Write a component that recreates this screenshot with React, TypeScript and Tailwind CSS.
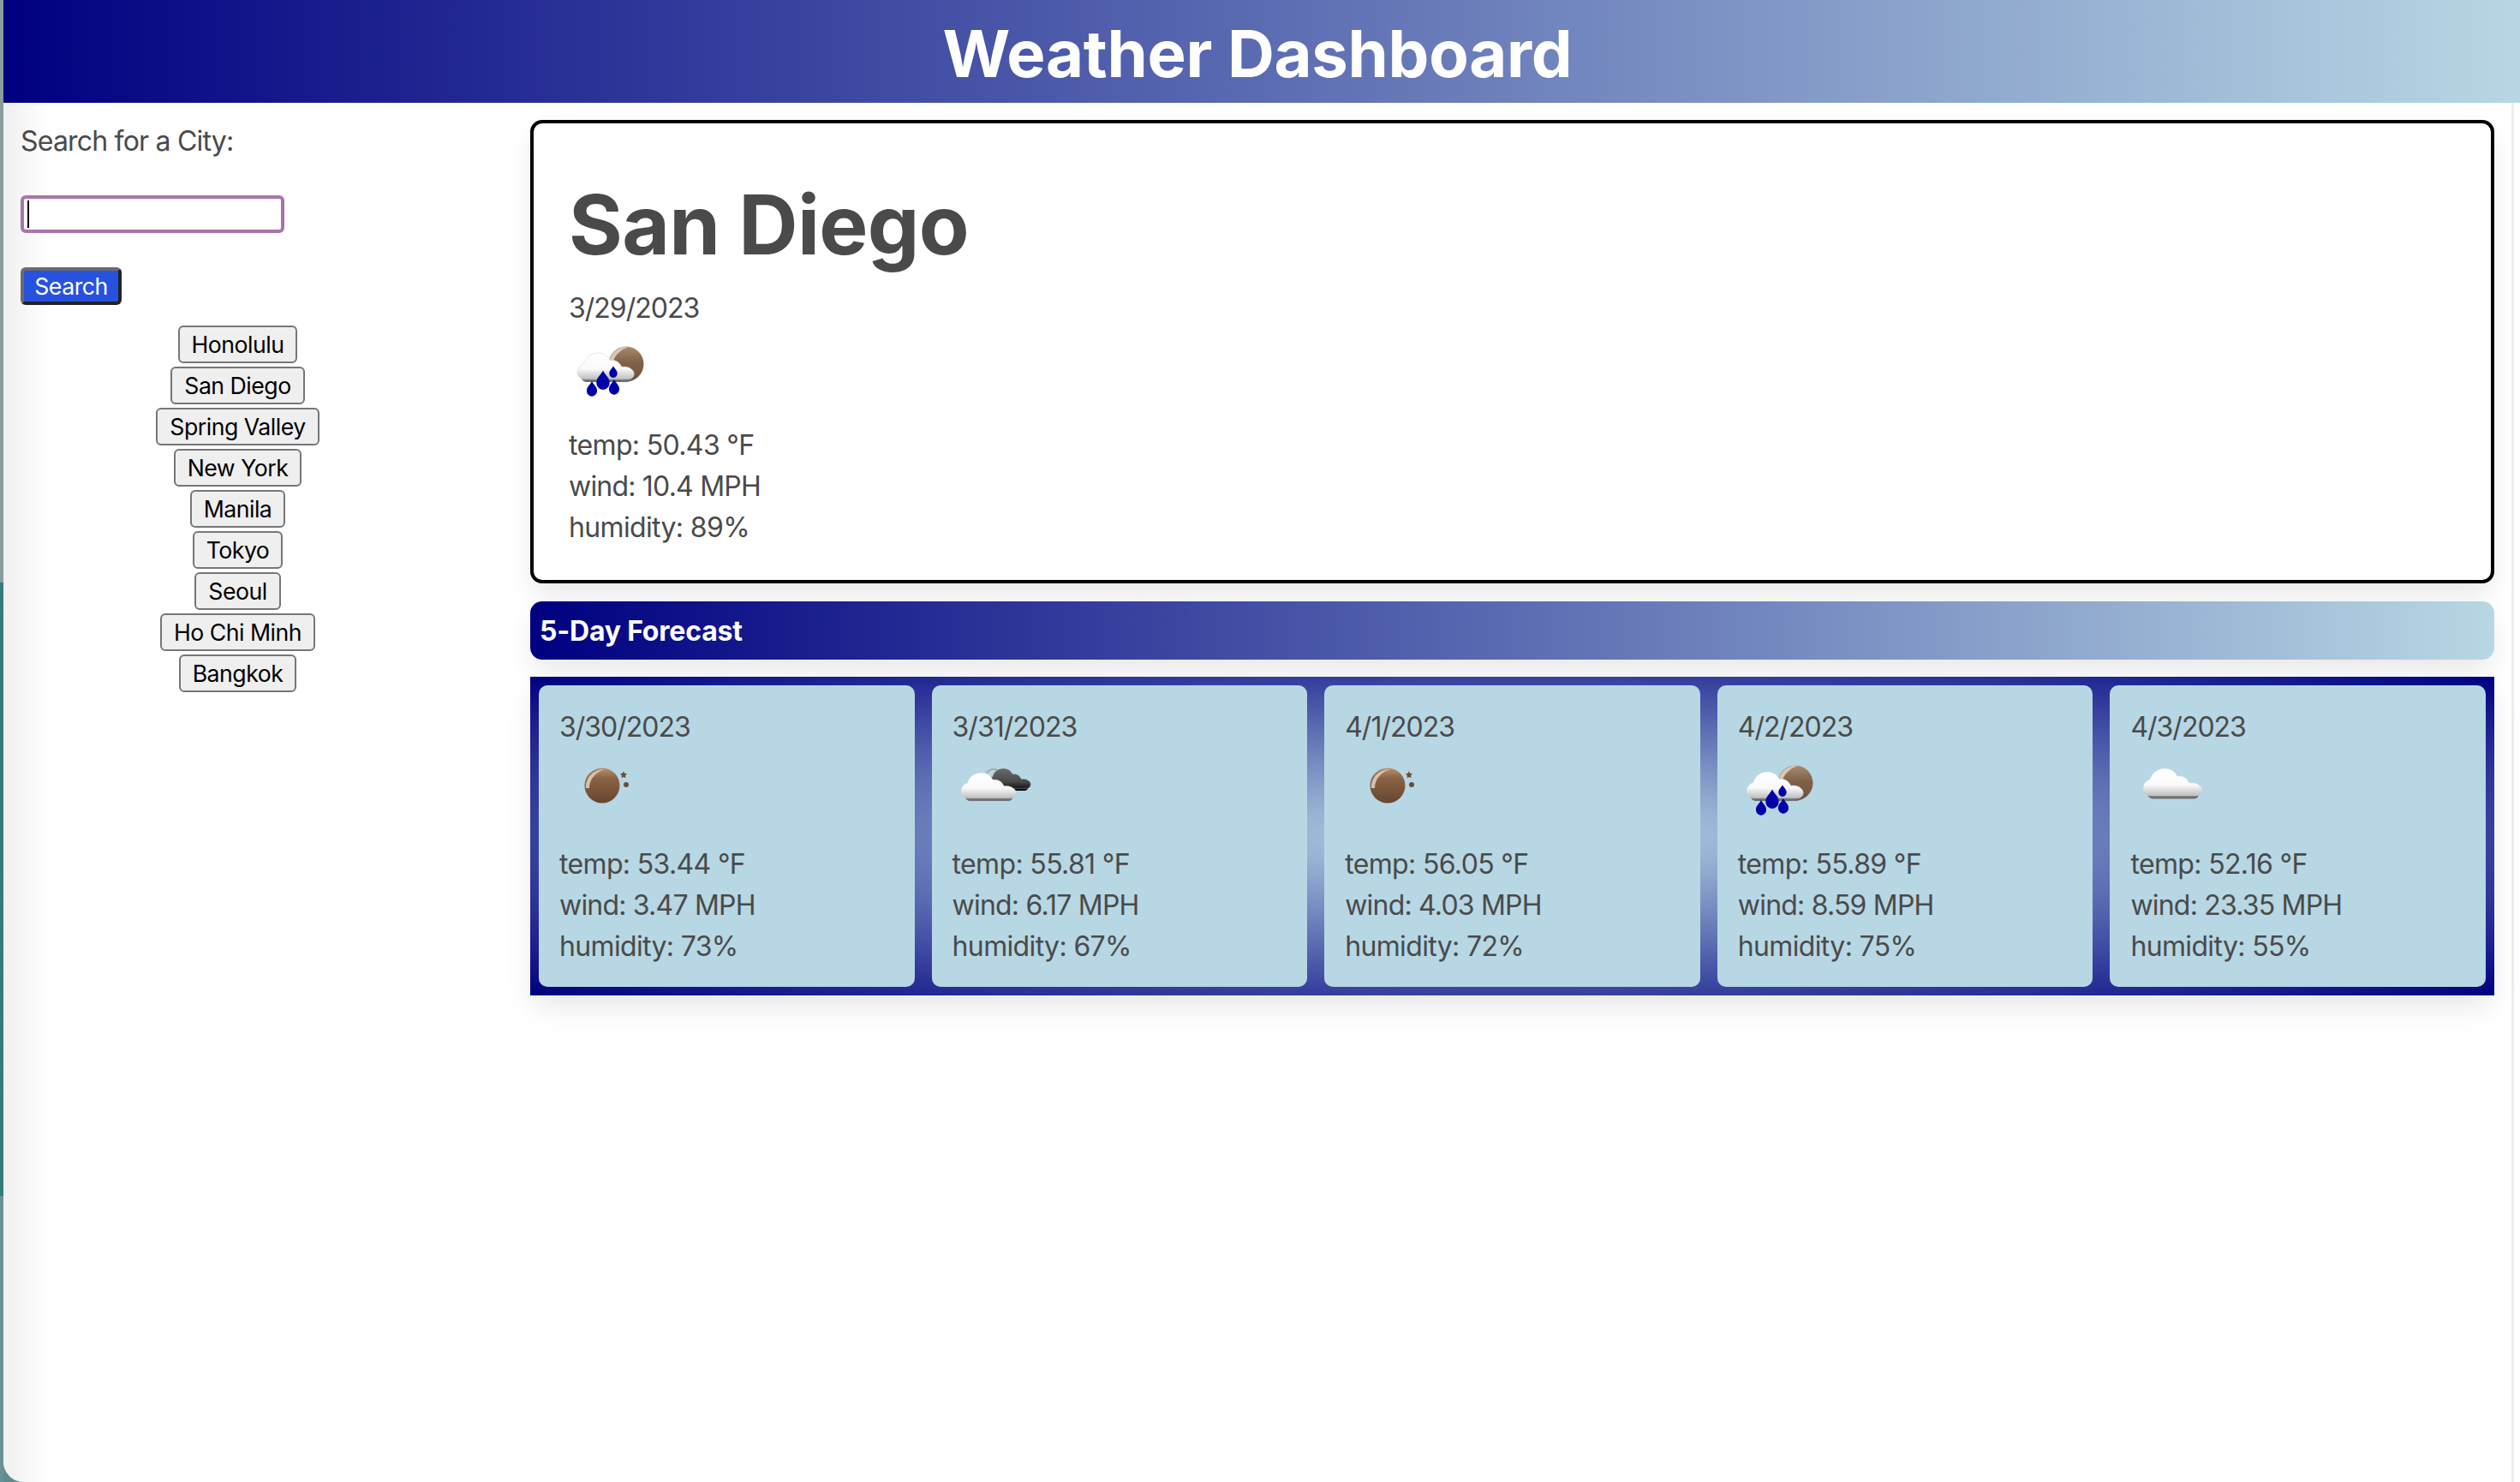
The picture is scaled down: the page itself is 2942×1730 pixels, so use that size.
const cities = ['Honolulu', 'San Diego', 'Spring Valley', 'New York', 'Manila', 'Tokyo', 'Seoul', 'Ho Chi Minh', 'Bangkok']

type IconKind = 'rain' | 'moon' | 'clouds' | 'cloud'

const forecast: { date: string; icon: IconKind; temp: string; wind: string; humidity: string }[] = [
  { date: '3/30/2023', icon: 'moon', temp: '53.44', wind: '3.47', humidity: '73' },
  { date: '3/31/2023', icon: 'clouds', temp: '55.81', wind: '6.17', humidity: '67' },
  { date: '4/1/2023', icon: 'moon', temp: '56.05', wind: '4.03', humidity: '72' },
  { date: '4/2/2023', icon: 'rain', temp: '55.89', wind: '8.59', humidity: '75' },
  { date: '4/3/2023', icon: 'cloud', temp: '52.16', wind: '23.35', humidity: '55' },
]

const CLOUD = 'M9 32C3 32 0 27 0 23C0 18 4 14 8 13C10 5 17 0 25 0C32 0 37 3 40 9C45 8 51 10 54 17C58 16 63 17 66 20C69 22 70 26 68 29C66 32 63 32 60 32Z'
const DROP = 'M0 -9C2 -5 5.5 -3 5.5 1C5.5 4.5 3 7 0 7C-3 7 -5.5 4.5 -5.5 1C-5.5 -3 -2 -5 0 -9Z'

function Cloud({ x, y, s = 1, fill = 'url(#cloudWhite)', base = '#6f6f6f' }: { x: number; y: number; s?: number; fill?: string; base?: string }) {
  return (
    <g transform={`translate(${x} ${y}) scale(${s})`}>
      <path d={CLOUD} fill={base} transform="translate(4 3.5) scale(0.89 1)" />
      <path d={CLOUD} fill={fill} stroke="#cfcfcf" strokeOpacity="0.55" strokeWidth="0.9" />
    </g>
  )
}

function WeatherIcon({ kind }: { kind: IconKind }) {
  return (
    <svg viewBox="0 0 100 100" className="block h-[100px] w-[100px]">
      <defs>
        <linearGradient id="cloudWhite" x1="0" y1="0" x2="0" y2="1">
          <stop offset="0" stopColor="#ffffff" />
          <stop offset="0.6" stopColor="#fafafa" />
          <stop offset="1" stopColor="#bdbdbd" />
        </linearGradient>
        <linearGradient id="cloudDark" x1="0" y1="0" x2="0" y2="1">
          <stop offset="0" stopColor="#6a6a6a" />
          <stop offset="0.65" stopColor="#4a4a4a" />
          <stop offset="1" stopColor="#161616" />
        </linearGradient>
        <linearGradient id="moonBall" x1="0" y1="0" x2="0" y2="1">
          <stop offset="0" stopColor="#b8906f" />
          <stop offset="0.3" stopColor="#8a6244" />
          <stop offset="1" stopColor="#664630" />
        </linearGradient>
        <linearGradient id="moonPale" x1="0" y1="0" x2="0" y2="1">
          <stop offset="0" stopColor="#a98a70" />
          <stop offset="0.45" stopColor="#806249" />
          <stop offset="1" stopColor="#6d5240" />
        </linearGradient>
        <filter id="soft" x="-10%" y="-10%" width="120%" height="120%">
          <feGaussianBlur stdDeviation="0.7" />
        </filter>
      </defs>
      <g filter="url(#soft)">
        {kind === 'moon' && (
          <>
            <circle cx="50" cy="44" r="20.5" fill="url(#moonBall)" />
            <path d="M31 47C30 35 40 25 53 25C44 28 35 35 35 47Z" fill="#d9c0ae" />
            <path d="M75 27L76.2 29.8L79 30.2L77 32.4L77.6 35.2L75 33.9L72.4 35.2L73 32.4L71 30.2L73.8 29.8Z" fill="#6e4c34" />
            <circle cx="78" cy="43" r="3" fill="#6e4c34" />
          </>
        )}
        {kind === 'rain' && (
          <>
            <circle cx="67" cy="41" r="20.5" fill="url(#moonPale)" />
            <path d="M47 38C49 27 59 20 71 20.5C62 23 54 30 52 38Z" fill="#d8c8ba" />
            <Cloud x={10} y={28} s={0.96} />
            <g fill="#0000a8">
              <path d={DROP} transform="translate(27 71) scale(1.1)" />
              <path d={DROP} transform="translate(40 61) scale(1.4)" />
              <path d={DROP} transform="translate(53 69) scale(1.1)" />
              <path d={DROP} transform="translate(52 51) scale(0.85)" />
            </g>
          </>
        )}
        {kind === 'clouds' && (
          <>
            <path d="M38 34C40 26 48 22 54 27" fill="none" stroke="#a8a8a8" strokeWidth="2" />
            <Cloud x={41} y={24} s={0.73} fill="url(#cloudDark)" base="#111111" />
            <Cloud x={10} y={29} s={0.93} />
          </>
        )}
        {kind === 'cloud' && <Cloud x={15} y={24} />}
      </g>
    </svg>
  )
}

function Stats({ temp, wind, humidity }: { temp: string; wind: string; humidity: string }) {
  return (
    <div className="mt-[12px]">
      <p>temp: {temp} °F</p>
      <p className="tracking-[-0.8px]">wind: {wind} MPH</p>
      <p>humidity: {humidity}%</p>
    </div>
  )
}

export default function App() {
  return (
    <div className="flex h-[1730px] w-[2942px] bg-[#5f8d8f] font-['Inter','Liberation_Sans',sans-serif] text-[32px] leading-[48px] tracking-[-0.65px] text-[#4a4a4a]">
      <div className="flex w-[4px] flex-col">
        <div className="h-[680px] bg-[#8a9c9b]" />
        <div className="h-[716px] bg-[#357a7c]" />
        <div className="flex-1 bg-[#6d9092]" />
      </div>

      <div className="flex flex-1 flex-col overflow-hidden rounded-bl-[24px] bg-white">
        <header className="h-[120px] bg-[linear-gradient(90deg,#000080,#b7d7e4)] pr-[10px] pt-[2px] text-center text-[76px] font-bold leading-[120px] tracking-[-0.3px] text-white">
          Weather Dashboard
        </header>

        <div className="flex flex-1 bg-[linear-gradient(90deg,#f0f0f0,#ffffff_56px)]">
          <aside className="w-[615px] pl-[20px] pr-[88px] pt-[21px]">
            <label className="block tracking-[-0.8px]">Search for a City:</label>
            <div className="relative mt-[39px] w-[308px]">
              <input type="text" className="block h-[44px] w-full rounded-[6px] border-[4px] border-[#a975a8] bg-white outline-none" />
              <span className="absolute left-[8px] top-[6px] h-[32px] w-[2px] bg-black" />
            </div>
            <button className="mt-[40px] block h-[44px] w-[118px] rounded-[6px] border-[4px] border-b-[#222222] border-l-[#6b6b6b] border-r-[#222222] border-t-[#6b6b6b] bg-[#2752e0] text-[26.67px] leading-none tracking-[-0.5px] text-white">
              Search
            </button>
            <div className="mt-[24px] flex flex-col items-center gap-[4px]">
              {cities.map((city) => (
                <button key={city} className="h-[44px] rounded-[6px] border-2 border-[#767676] bg-[#efefef] px-[14px] text-[26.67px] leading-none tracking-[-0.5px] text-black">
                  {city}
                </button>
              ))}
            </div>
          </aside>

          <main className="flex-1 pr-[20px] pt-[20px]">
            <section className="h-[541px] rounded-[14px] border-[4px] border-black bg-white px-[41px] pt-[58px] shadow-[0_16px_32px_-4px_rgba(10,10,10,0.1)]">
              <h1 className="text-[96px] font-bold leading-[120px] tracking-[-0.7px]">San Diego</h1>
              <p className="mt-[14px] tracking-[-1px]">3/29/2023</p>
              <WeatherIcon kind="rain" />
              <Stats temp="50.43" wind="10.4" humidity="89" />
            </section>

            <h2 className="mt-[21px] h-[68px] rounded-[14px] bg-[linear-gradient(90deg,#000080,#b7d7e4)] pl-[11px] pt-[1px] text-[32px] font-bold leading-[68px] tracking-[-0.2px] text-white shadow-[0_16px_32px_-4px_rgba(10,10,10,0.1)]">
              5-Day Forecast
            </h2>

            <div className="mt-[20px] grid h-[372px] grid-cols-5 gap-[20px] bg-[radial-gradient(#b7d7e4,#000080)] p-[10px] shadow-[0_16px_32px_-4px_rgba(10,10,10,0.1)]">
              {forecast.map((day) => (
                <div key={day.date} className="rounded-[10px] bg-[#b7d7e4] pl-[24px] pt-[25px]">
                  <p className="tracking-[-1px]">{day.date}</p>
                  <WeatherIcon kind={day.icon} />
                  <Stats temp={day.temp} wind={day.wind} humidity={day.humidity} />
                </div>
              ))}
            </div>
          </main>

          <div className="w-[10px] border-l-[3px] border-[#ececec]" />
        </div>
      </div>
    </div>
  )
}
